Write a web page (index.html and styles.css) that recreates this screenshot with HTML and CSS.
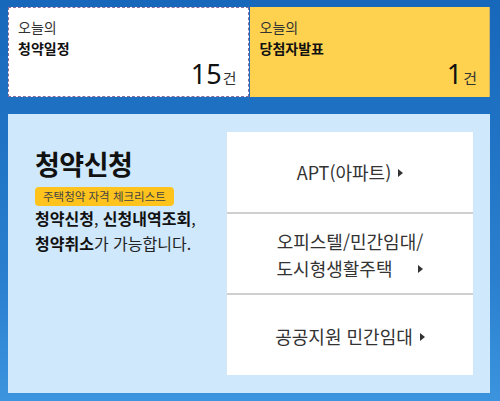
FILE: index.html
```html
<!DOCTYPE html>
<html lang="ko">
<head>
    <meta charset="UTF-8">
    <meta name="viewport" content="width=device-width, initial-scale=1.0">
    <title>청약홈</title>
    <link rel="stylesheet" href="styles.css">
</head>
<body>
    <div class="wrap">
        <div class="today">
            <a class="today-card schedule" href="#">
                <span class="label">오늘의</span>
                <strong class="title">청약일정</strong>
                <span class="count"><em>15</em>건</span>
            </a>
            <a class="today-card winner" href="#">
                <span class="label">오늘의</span>
                <strong class="title">당첨자발표</strong>
                <span class="count"><em>1</em>건</span>
            </a>
        </div>

        <div class="apply">
            <div class="apply-info">
                <h2>청약신청</h2>
                <a class="checklist" href="#">주택청약 자격 체크리스트</a>
                <p><b>청약신청</b>, <b>신청내역조회</b>,<br><b>청약취소</b>가 가능합니다.</p>
            </div>
            <ul class="apply-menu">
                <li><a href="#">APT(아파트)<i class="arrow"></i></a></li>
                <li><a href="#">오피스텔/민간임대/<br>도시형생활주택<i class="arrow wide"></i></a></li>
                <li><a href="#">공공지원 민간임대<i class="arrow"></i></a></li>
            </ul>
        </div>
    </div>
</body>
</html>
```

FILE: styles.css
```css
* {
    box-sizing: border-box;
}

body {
    margin: 0;
    font-family: "Noto Sans CJK KR", "Noto Sans", sans-serif;
    background: linear-gradient(180deg, #1767ba 0%, #2a80cf 70%, #3c94de 100%);
    color: #222;
}

a {
    color: inherit;
    text-decoration: none;
}

.wrap {
    width: 500px;
    height: 401px;
    padding: 7px 10px 0 8px;
}

.today {
    display: flex;
    gap: 1px;
    height: 90px;
}

.today-card {
    flex: 1;
    display: flex;
    flex-direction: column;
    padding: 10px 12px 0 10px;
    position: relative;
}

.schedule {
    background: #fff;
    border: 1px dashed #8c6a9c;
    padding-left: 9px;
    padding-top: 9px;
}

.winner {
    background: #fed24f;
    border-right: 1px solid #c9b46a;
}

.label {
    font-size: 14px;
    line-height: 20px;
    color: #333;
}

.title {
    font-size: 14px;
    line-height: 22px;
    font-weight: 700;
    color: #111;
}

.count {
    margin-top: auto;
    margin-bottom: 7px;
    align-self: flex-end;
    font-size: 15px;
    color: #333;
    line-height: 30px;
}

.count em {
    font-style: normal;
    font-size: 27px;
    color: #111;
    font-family: "Noto Sans", sans-serif;
    margin-right: 1px;
}

.schedule .count {
    margin-right: -1px;
    margin-bottom: 6px;
}

.apply {
    margin-top: 17px;
    height: 279px;
    background: #cfe8fb;
    display: flex;
    padding: 18px 17px 18px 27px;
}

.apply-info {
    flex: 1;
    padding-top: 15px;
}

.apply-info h2 {
    margin: 0;
    font-size: 27px;
    line-height: 34px;
    font-weight: 700;
    color: #111;
    letter-spacing: -0.5px;
}

.checklist {
    display: inline-block;
    margin-top: 6px;
    padding: 1px 8px;
    background: #fec31c;
    border-radius: 4px;
    font-size: 11.5px;
    line-height: 17px;
    color: #444;
}

.apply-info p {
    margin: 0;
    font-size: 16px;
    line-height: 25px;
    color: #222;
}

.apply-info b {
    font-weight: 700;
    color: #111;
}

.apply-menu {
    list-style: none;
    margin: 0;
    padding: 0;
    width: 246px;
    background: #fff;
    display: flex;
    flex-direction: column;
}

.apply-menu li {
    flex: 1;
    display: flex;
    align-items: center;
    justify-content: center;
    border-top: 2px solid #cfcfcf;
}

.apply-menu li:first-child {
    border-top: none;
}

.apply-menu a {
    font-size: 18px;
    line-height: 27px;
    color: #333;
    text-align: center;
    padding-top: 2px;
}

.arrow {
    display: inline-block;
    width: 0;
    height: 0;
    margin-left: 7px;
    vertical-align: 3px;
    border-top: 4px solid transparent;
    border-bottom: 4px solid transparent;
    border-left: 5px solid #333;
}

.arrow.wide {
    margin-left: 26px;
}
```
